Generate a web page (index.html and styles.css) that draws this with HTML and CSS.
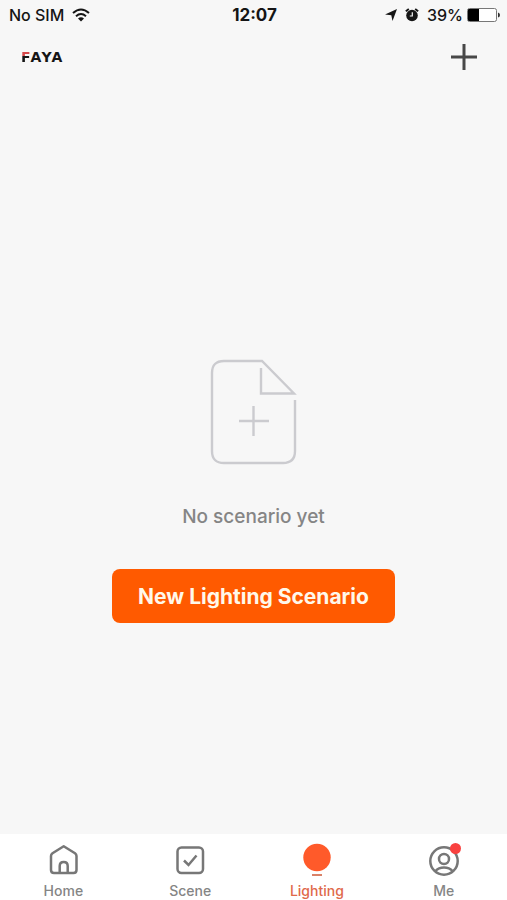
FILE: index.html
```html
<!DOCTYPE html>
<html lang="en">
<head>
    <meta charset="UTF-8">
    <meta name="viewport" content="width=device-width, initial-scale=1.0">
    <title>Lighting</title>
    <link rel="stylesheet" href="styles.css">
</head>
<body>
    <div class="status-bar">
        <div class="status-left">
            <span>No SIM</span>
            <svg width="18" height="14" viewBox="0 0 18 14" fill="none" stroke="#151515" stroke-width="2">
                <path d="M1 5Q9-2 17 5M4 8.200Q9 3.800 14 8.200"/>
                <path d="M6 10.500Q9 8 12 10.500L9 13.500Z" fill="#151515" stroke="none"/>
            </svg>
        </div>
        <span class="status-time">12:07</span>
        <div class="status-right">
            <svg width="12" height="12" viewBox="0 0 12 12" fill="#151515">
                <path d="M12 0L7.500 12L6.300 6.200L0 5.500Z"/>
            </svg>
            <svg class="alarm" width="14" height="14" viewBox="0 0 14 14">
                <circle cx="7" cy="7.500" r="5.800" fill="#151515"/>
                <path d="M.8 3.200L3.800 1M13.200 3.200L10.200 1" stroke="#151515" stroke-width="1.800"/>
                <path d="M7.300 4.200V8H4.800" fill="none" stroke="#f7f7f7" stroke-width="1.200"/>
            </svg>
            <span>39%</span>
            <svg width="33" height="14" viewBox="0 0 33 14">
                <rect x=".5" y=".5" width="29" height="13" rx="2" fill="#fff" stroke="#777"/>
                <path d="M2 1H12V13H2Q1 13 1 12V2Q1 1 2 1Z" fill="#000"/>
                <path d="M31 4.500Q33 5 33 7T31 9.500Z" fill="#333"/>
            </svg>
        </div>
    </div>

    <header class="header">
        <a class="logo" href="#" aria-label="FAYA"><span class="logo-f">F</span>AYA</a>
        <button class="add-btn" aria-label="Add">
            <svg width="28" height="28" viewBox="0 0 28 28" stroke="#484848" stroke-width="3">
                <path d="M1 14H27M14 1V27"/>
            </svg>
        </button>
    </header>

    <main class="empty">
        <svg width="88" height="106" viewBox="0 0 88 106" fill="none" stroke="#cbcbcf" stroke-width="2.400">
            <path d="M85 41V92Q85 104 73 104H14Q2 104 2 92V14Q2 2 14 2H52L84 34.500H51V9"/>
            <path d="M29 62H59M43.500 47V77"/>
        </svg>
        <p class="empty-text">No scenario yet</p>
        <button class="new-btn">New Lighting Scenario</button>
    </main>

    <nav class="tabs">
        <a class="tab" href="#">
            <svg width="34" height="34" viewBox="0 0 34 34" fill="none" stroke="#777" stroke-width="2.500" stroke-linejoin="round">
                <path d="M5 13Q5 11.500 6.500 10.300L17.700 3.200L29 10.300Q30.500 11.500 30.500 13V27Q30.500 30 27.500 30H8Q5 30 5 27Z"/>
                <path d="M13.700 30V23Q13.700 19 17.700 19T21.700 23V30"/>
            </svg>
            <span>Home</span>
        </a>
        <a class="tab" href="#">
            <svg width="34" height="34" viewBox="0 0 34 34" fill="none" stroke="#777" stroke-width="2.500">
                <rect x="4.500" y="4.500" width="25.500" height="25.500" rx="4"/>
                <path d="M11 17.500L15.500 22L23.500 12.500"/>
            </svg>
            <span>Scene</span>
        </a>
        <a class="tab active" href="#">
            <svg width="34" height="34" viewBox="0 0 34 34">
                <circle cx="17" cy="14.500" r="13.700" fill="#ff5a2a"/>
                <path d="M12 32H22" stroke="#d98268" stroke-width="2"/>
            </svg>
            <span>Lighting</span>
        </a>
        <a class="tab" href="#">
            <span class="tab-icon">
                <svg width="34" height="34" viewBox="0 0 34 34" fill="none" stroke="#777" stroke-width="2.500">
                    <circle cx="17" cy="18" r="13.700"/>
                    <circle cx="17" cy="16" r="5"/>
                    <path d="M8.500 28Q11.500 24.500 17 24.500T25.500 28"/>
                </svg>
                <i class="dot"></i>
            </span>
            <span>Me</span>
        </a>
    </nav>
</body>
</html>
```
FILE: styles.css
```css
* {
    box-sizing: border-box;
}
body {
    display: flex;
    flex-direction: column;
    min-height: 100vh;
    margin: 0;
    background: #f7f7f7;
    font-family: Inter, "Liberation Sans", sans-serif;
}
svg {
    display: block;
}
button {
    border: none;
    font-family: inherit;
    cursor: pointer;
}
.status-bar {
    display: grid;
    grid-template-columns: 1fr auto 1fr;
    align-items: center;
    height: 30px;
    padding: 0 7px 0 9px;
    color: #151515;
    font-size: 16px;
    font-weight: 500;
}
.status-left,
.status-right {
    display: flex;
    align-items: center;
    gap: 8px;
}
.status-right {
    justify-content: flex-end;
    gap: 4px;
}
.status-time {
    font-size: 17px;
    font-weight: 700;
}
.alarm {
    margin: 0 4px;
}
.header {
    display: flex;
    justify-content: space-between;
    align-items: center;
    height: 54px;
    padding: 0 24px 0 21px;
}
.logo {
    color: #151515;
    font-family: "DejaVu Sans", sans-serif;
    font-size: 14px;
    font-weight: 700;
    font-kerning: none;
    line-height: 16px;
    text-decoration: none;
}
.logo-f {
    background: linear-gradient(#d5484a 45%, #151515 45%);
    -webkit-background-clip: text;
    background-clip: text;
    color: transparent;
}
.add-btn {
    padding: 5px;
    background: none;
}
.empty {
    display: flex;
    flex: 1;
    flex-direction: column;
    align-items: center;
    justify-content: center;
    padding-top: 64px;
}
.empty-text {
    margin: 40px 0;
    color: #858585;
    font-size: 19px;
    font-weight: 500;
    line-height: 24px;
}
.new-btn {
    min-height: 54px;
    padding: 0 26px;
    border-radius: 8px;
    background: #ff5a00;
    color: #fff8ea;
    font-size: 21px;
    font-weight: 700;
}
.tabs {
    display: flex;
    height: 66px;
    padding-top: 9px;
    background: #fff;
}
.tab {
    display: flex;
    flex: 1;
    flex-direction: column;
    align-items: center;
    gap: 6px;
    color: #858585;
    font-size: 14px;
    font-weight: 500;
    line-height: 16px;
    text-decoration: none;
}
.tab.active {
    color: #e0694a;
}
.tab-icon {
    position: relative;
}
.dot {
    position: absolute;
    top: 0;
    right: 0;
    width: 11px;
    height: 11px;
    border-radius: 50%;
    background: #f9413f;
}
```
